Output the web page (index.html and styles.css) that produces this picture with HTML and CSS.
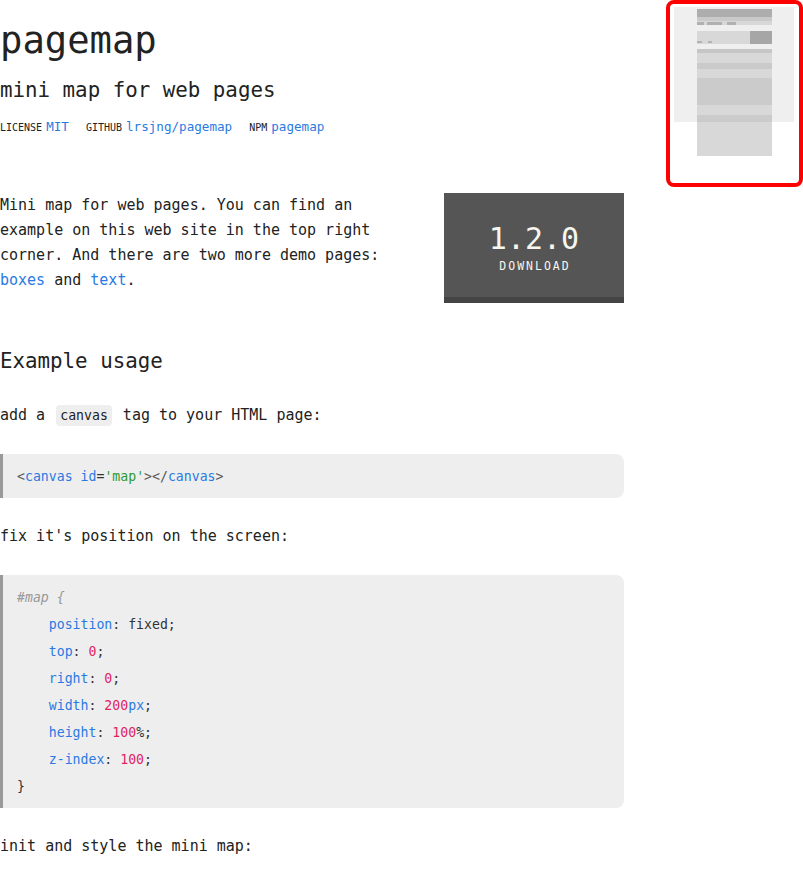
FILE: index.html
```html
<!DOCTYPE html>
<html lang="en">
<head>
<meta charset="utf-8">
<title>pagemap</title>
<link rel="stylesheet" href="styles.css">
</head>
<body>
<main class="page">
  <header class="hero">
    <h1 class="title">pagemap</h1>
    <p class="subtitle">mini map for web pages</p>
    <div class="meta">
      <span class="meta-item"><span class="meta-label">LICENSE</span><a class="link" href="#">MIT</a></span>
      <span class="meta-item"><span class="meta-label">GITHUB</span><a class="link" href="#">lrsjng/pagemap</a></span>
      <span class="meta-item"><span class="meta-label">NPM</span><a class="link" href="#">pagemap</a></span>
    </div>
  </header>

  <section class="intro">
    <p class="intro-text">Mini map for web pages. You can find an example on this web site in the top right corner. And there are two more demo pages: <a class="link" href="#">boxes</a> and <a class="link" href="#">text</a>.</p>
    <a class="download" href="#"><span class="version">1.2.0</span><span class="download-label">DOWNLOAD</span></a>
  </section>

  <h2 class="section-title">Example usage</h2>

  <div class="article">
    <p class="text">add a <code class="inline-code">canvas</code> tag to your HTML page:</p>
    <pre class="code"><span class="c-punc">&lt;</span><span class="c-tag">canvas</span> <span class="c-attr">id</span>=<span class="c-str">'map'</span><span class="c-punc">&gt;&lt;/</span><span class="c-tag">canvas</span><span class="c-punc">&gt;</span></pre>
    <p class="text">fix it's position on the screen:</p>
    <pre class="code"><span class="c-comment">#map {</span>
    <span class="c-tag">position</span>: fixed;
    <span class="c-tag">top</span>: <span class="c-num">0</span>;
    <span class="c-tag">right</span>: <span class="c-num">0</span>;
    <span class="c-tag">width</span>: <span class="c-num">200</span><span class="c-tag">px</span>;
    <span class="c-tag">height</span>: <span class="c-num">100</span>%;
    <span class="c-tag">z-index</span>: <span class="c-num">100</span>;
}</pre>
    <p class="text">init and style the mini map:</p>
  </div>
</main>

<div class="minimap">
  <svg class="minimap-svg" width="129" height="179" viewBox="670 4 129 179" xmlns="http://www.w3.org/2000/svg">
    <rect x="674" y="7" width="120" height="115" fill="#efefef"/>
    <rect x="697" y="9" width="75" height="8" fill="#adadad"/>
    <rect x="697" y="17" width="75" height="4" fill="#c9c9c9"/>
    <rect x="697" y="21" width="75" height="4" fill="#d8d8d8"/>
    <rect x="697" y="22" width="7" height="3" fill="#b0b0b0"/>
    <rect x="707" y="22" width="15" height="3" fill="#b0b0b0"/>
    <rect x="727" y="22" width="9" height="3" fill="#b0b0b0"/>
    <rect x="697" y="31" width="53" height="13" fill="#d8d8d8"/>
    <rect x="750" y="31" width="22" height="13" fill="#a6a6a6"/>
    <rect x="697" y="41" width="5" height="2" fill="#b3b3b3"/>
    <rect x="708" y="41" width="4" height="2" fill="#b3b3b3"/>
    <rect x="697" y="49" width="75" height="107" fill="#d8d8d8"/>
    <rect x="697" y="49" width="75" height="4" fill="#c6c6c6"/>
    <rect x="697" y="63" width="75" height="6" fill="#cacaca"/>
    <rect x="697" y="78" width="75" height="27" fill="#cbcbcb"/>
    <rect x="697" y="115" width="75" height="7" fill="#cbcbcb"/>
  </svg>
</div>
</body>
</html>
```

FILE: styles.css
```css
* {
  box-sizing: border-box;
}

html, body {
  margin: 0;
  padding: 0;
  background: #fff;
}

body {
  font-family: "DejaVu Sans Mono", "Liberation Mono", monospace;
  font-size: 15px;
  line-height: 25px;
  color: #222;
}

.page {
  width: 624px;
  padding-top: 18px;
}

.link {
  color: #2a7ae2;
  text-decoration: none;
}

.title {
  margin: 0;
  font-size: 37.2px;
  line-height: 44px;
  font-weight: normal;
}

.subtitle {
  margin: 14px 0 0;
  font-size: 20.8px;
  line-height: 28px;
}

.meta {
  margin-top: 13px;
  display: flex;
  align-items: baseline;
  gap: 17px;
  line-height: 20px;
}

.meta-item {
  display: inline-flex;
  align-items: baseline;
  gap: 4px;
}

.meta-label {
  font-size: 10px;
}

.meta-item .link {
  font-size: 12.6px;
}

.intro {
  margin-top: 55px;
  display: flex;
  justify-content: space-between;
  align-items: flex-start;
}

.intro-text {
  margin: 0;
  width: 400px;
}

.download {
  width: 180px;
  height: 110px;
  background: #555;
  border-bottom: 6px solid #444;
  color: #f6f6ee;
  text-decoration: none;
  display: flex;
  flex-direction: column;
  align-items: center;
  padding-top: 29px;
}

.version {
  font-size: 30px;
  line-height: 34px;
}

.download-label {
  margin-top: 3px;
  font-size: 11.5px;
  line-height: 14px;
  letter-spacing: 2px;
  padding-left: 2px;
}

.section-title {
  margin: 44px 0 0;
  font-size: 20.8px;
  line-height: 28px;
  font-weight: normal;
}

.article {
  margin-top: 28px;
  display: flex;
  flex-direction: column;
  gap: 26px;
}

.text {
  margin: 0;
}

.inline-code {
  font-family: inherit;
  font-size: 13.2px;
  background: #eee;
  border-radius: 4px;
  padding: 3px 4px;
  margin: 0 2px;
}

.code {
  margin: 0;
  background: #eee;
  border-left: 3px solid #999;
  border-radius: 0 8px 8px 0;
  padding: 8.5px 14px;
  font-family: inherit;
  font-size: 13.2px;
  line-height: 27px;
  color: #333;
}

.c-punc { color: #555; }
.c-tag { color: #2a7ae2; }
.c-attr { color: #2a7ae2; }
.c-str { color: #2e9a2e; }
.c-num { color: #e0245e; }
.c-comment { color: #999; font-style: italic; }

.minimap {
  position: fixed;
  top: 0;
  right: 0;
  width: 137px;
  height: 187px;
  border: 4px solid #f00;
  border-radius: 8px;
  background: #fff;
  overflow: hidden;
}

.minimap-svg {
  display: block;
}
```
